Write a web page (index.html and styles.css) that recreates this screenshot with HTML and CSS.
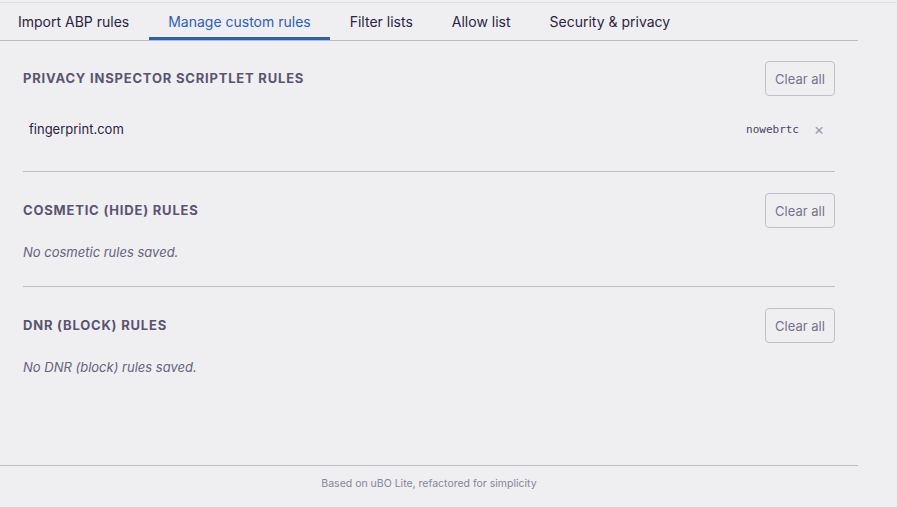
FILE: index.html
```html
<!DOCTYPE html>
<html lang="en">
<head>
    <meta charset="UTF-8">
    <meta name="viewport" content="width=device-width, initial-scale=1.0">
    <title>Manage custom rules</title>
    <link rel="stylesheet" href="styles.css">
</head>
<body>
    <div class="page">
        <nav class="tabs">
            <a class="tab">Import ABP rules</a>
            <a class="tab active">Manage custom rules</a>
            <a class="tab">Filter lists</a>
            <a class="tab">Allow list</a>
            <a class="tab">Security &amp; privacy</a>
        </nav>

        <main class="content">
            <section class="rule-section">
                <div class="section-head">
                    <h3>Privacy inspector scriptlet rules</h3>
                    <button class="clear-btn">Clear all</button>
                </div>
                <ul class="rule-list">
                    <li class="rule-row">
                        <span class="rule-domain">fingerprint.com</span>
                        <span class="rule-tag">nowebrtc</span>
                        <span class="rule-remove">&#215;</span>
                    </li>
                </ul>
            </section>

            <section class="rule-section">
                <div class="section-head">
                    <h3>Cosmetic (hide) rules</h3>
                    <button class="clear-btn">Clear all</button>
                </div>
                <p class="empty">No cosmetic rules saved.</p>
            </section>

            <section class="rule-section">
                <div class="section-head">
                    <h3>DNR (block) rules</h3>
                    <button class="clear-btn">Clear all</button>
                </div>
                <p class="empty">No DNR (block) rules saved.</p>
            </section>
        </main>

        <footer class="footer">Based on uBO Lite, refactored for simplicity</footer>
    </div>
</body>
</html>
```

FILE: styles.css
```css
html, body {
    margin: 0;
    padding: 0;
}

body {
    font-family: Inter, "Noto Sans", sans-serif;
    background-color: #efeff2;
    color: #2a2440;
    border-top: 1px solid #dcdce2;
    margin-top: 2px;
}

.page {
    width: 858px;
    height: 504px;
    display: flex;
    flex-direction: column;
}

.tabs {
    display: flex;
    height: 37px;
    border-bottom: 1px solid #bdbcc4;
}

.tab {
    display: flex;
    align-items: center;
    padding: 2px 19.5px 0;
    font-size: 14px;
    color: #2a2440;
    border-bottom: 3px solid transparent;
    margin-bottom: -1px;
    box-sizing: border-box;
    height: 37px;
    cursor: pointer;
}

.tab:first-child {
    padding-left: 18px;
}

.tab.active {
    color: #2c5fb3;
    border-bottom-color: #2c5fb3;
}

.content {
    flex: 1;
    padding: 0 23px;
}

.rule-section {
    padding: 20px 0 25px;
    border-bottom: 1px solid #bdbcc4;
}

.rule-section + .rule-section {
    padding-top: 21px;
}

.rule-section:last-child {
    border-bottom: none;
}

.section-head {
    display: flex;
    justify-content: space-between;
    align-items: center;
    height: 35px;
}

.section-head h3 {
    margin: 0 0 2px;
    font-size: 13px;
    font-weight: 700;
    letter-spacing: 0.8px;
    text-transform: uppercase;
    color: #5a5470;
}

.clear-btn {
    width: 70px;
    height: 35px;
    font-family: Inter, "Noto Sans", sans-serif;
    font-size: 13px;
    color: #77728b;
    background: transparent;
    border: 1px solid #c2c1ca;
    border-radius: 4px;
    cursor: pointer;
}

.rule-list {
    list-style: none;
    margin: 16px 0 0;
    padding: 0;
}

.rule-row {
    display: flex;
    align-items: center;
    height: 34px;
    padding: 0 8px 0 6px;
    font-size: 13px;
}

.rule-domain {
    flex: 1;
    color: #2a2440;
}

.rule-tag {
    font-family: "DejaVu Sans Mono", monospace;
    font-size: 11px;
    color: #4a4560;
}

.rule-remove {
    margin-left: 12px;
    width: 16px;
    text-align: center;
    font-size: 16px;
    color: #9c9aa7;
    cursor: pointer;
}

.empty {
    margin: 15px 0 0;
    font-size: 13px;
    line-height: 18px;
    font-style: italic;
    color: #67627c;
}

.footer {
    border-top: 1px solid #bdbcc4;
    height: 42px;
    display: flex;
    justify-content: center;
    align-items: center;
    font-size: 10.5px;
    color: #88849a;
    padding-bottom: 7px;
    box-sizing: border-box;
}
```
